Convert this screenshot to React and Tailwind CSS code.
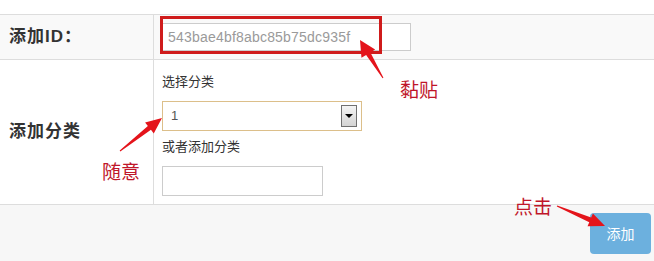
import React from 'react';

// tapered red arrow: thin tail, wide head at the tip
const arrowPoints = (tail, tip, headLen, headW, shaftW) => {
  const dx = tip[0] - tail[0];
  const dy = tip[1] - tail[1];
  const len = Math.hypot(dx, dy);
  const ux = dx / len;
  const uy = dy / len;
  const px = -uy;
  const py = ux;
  const bx = tip[0] - ux * headLen;
  const by = tip[1] - uy * headLen;
  const pts = [
    [tail[0] + px * 0.5, tail[1] + py * 0.5],
    [bx + px * shaftW, by + py * shaftW],
    [bx + px * headW, by + py * headW],
    tip,
    [bx - px * headW, by - py * headW],
    [bx - px * shaftW, by - py * shaftW],
    [tail[0] - px * 0.5, tail[1] - py * 0.5],
  ];
  return pts.map((p) => p.join(',')).join(' ');
};

const Arrows = () => (
  <svg className="absolute left-0 top-0 pointer-events-none" width="654" height="261">
    <polygon points={arrowPoints([383, 78], [360, 40], 16, 8, 2.5)} fill="#e4141b" />
    <polygon points={arrowPoints([120, 151], [162, 118], 16, 7, 2.5)} fill="#e4141b" />
    <polygon points={arrowPoints([557, 206], [605, 226], 16, 7, 2.5)} fill="#e4141b" />
  </svg>
);

const App = () => {
  return (
    <div className="relative w-[654px] h-[261px] bg-white flex flex-col text-[#333] font-['Liberation_Sans','Noto_Sans_CJK_SC',sans-serif]">
      <div className="h-[15px] border-b border-[#dddddd]" />

      <div className="flex h-[45px] bg-[#f9f9f9] border-b border-[#dddddd]">
        <div className="w-[154px] border-r border-[#dddddd] flex items-center pl-[9px] text-[17px] font-bold tracking-[1px]">
          添加ID：
        </div>
        <div className="flex items-center pl-[8px]">
          <div className="w-[249px] h-[28px] border border-[#cccccc] bg-white flex items-center pl-[5px] text-[14px] tracking-[0.2px] text-[#9a9a9a]">
            543bae4bf8abc85b75dc935f
          </div>
        </div>
      </div>

      <div className="flex h-[145px] border-b border-[#dddddd]">
        <div className="w-[154px] border-r border-[#dddddd] flex items-center pl-[9px] text-[17px] font-bold tracking-[1px]">
          添加分类
        </div>
        <div className="flex flex-col pl-[8px] pt-[13px] text-[13px] leading-[18px]">
          <div>选择分类</div>
          <div className="mt-[10px] w-[200px] h-[30px] border border-[#dcbf8a] bg-white flex items-center justify-between pl-[8px] pr-[4px] text-[#555]">
            <span>1</span>
            <div className="w-[16px] h-[22px] border border-[#707070] bg-gradient-to-b from-[#f4f4f4] to-[#d4d4d4] flex items-center justify-center">
              <div className="w-0 h-0 border-l-[4px] border-r-[4px] border-t-[4px] border-l-transparent border-r-transparent border-t-black" />
            </div>
          </div>
          <div className="mt-[7px]">或者添加分类</div>
          <div className="mt-[10px] w-[161px] h-[30px] border border-[#cccccc] bg-white" />
        </div>
      </div>

      <div className="flex-1 bg-[#f7f7f7] flex justify-end items-start pt-[8px] pr-[3px]">
        <button className="w-[61px] h-[41px] rounded-[4px] bg-[#6cb0de] text-white text-[14px] font-['Noto_Sans_CJK_SC',sans-serif]">
          添加
        </button>
      </div>

      <div className="absolute left-[160px] top-[16px] w-[222px] h-[38px] border-[3px] border-[#cf1b1b]" />

      <Arrows />

      <div className="absolute left-[400px] top-[78px] text-[19px] leading-[22px] text-[#c0162a] font-['Noto_Sans_CJK_SC',sans-serif]">黏贴</div>
      <div className="absolute left-[102px] top-[160px] text-[19px] leading-[22px] text-[#c0162a] font-['Noto_Sans_CJK_SC',sans-serif]">随意</div>
      <div className="absolute left-[514px] top-[195px] text-[19px] leading-[22px] text-[#c0162a] font-['Noto_Sans_CJK_SC',sans-serif]">点击</div>
    </div>
  );
};

export default App;
